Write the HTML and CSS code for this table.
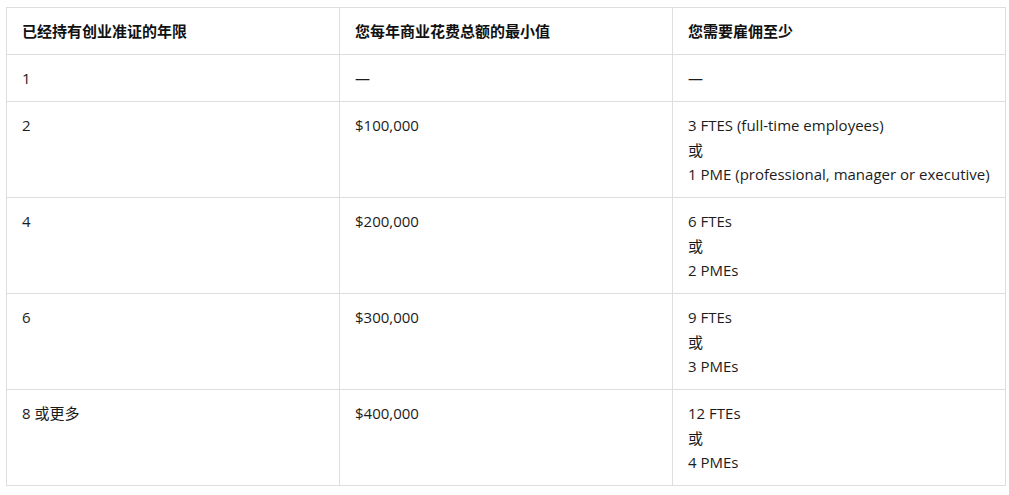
FILE: index.html
```html
<!DOCTYPE html>
<html lang="zh-CN">
<head>
<meta charset="utf-8">
<link rel="stylesheet" href="styles.css">
</head>
<body>
<table class="req-table">
  <thead>
    <tr>
      <th>已经持有创业准证的年限</th>
      <th>您每年商业花费总额的最小值</th>
      <th>您需要雇佣至少</th>
    </tr>
  </thead>
  <tbody>
    <tr>
      <td>1</td>
      <td>—</td>
      <td>—</td>
    </tr>
    <tr>
      <td>2</td>
      <td>$100,000</td>
      <td>3 FTES (full-time employees)<br>或<br>1 PME (professional, manager or executive)</td>
    </tr>
    <tr>
      <td>4</td>
      <td>$200,000</td>
      <td>6 FTEs<br>或<br>2 PMEs</td>
    </tr>
    <tr>
      <td>6</td>
      <td>$300,000</td>
      <td>9 FTEs<br>或<br>3 PMEs</td>
    </tr>
    <tr>
      <td>8 或更多</td>
      <td>$400,000</td>
      <td>12 FTEs<br>或<br>4 PMEs</td>
    </tr>
  </tbody>
</table>
</body>
</html>
```

FILE: styles.css
```css
html, body {
  margin: 0;
  background: #ffffff;
}
body {
  padding: 7px 0 0 6px;
  font-family: "Open Sans", "Noto Sans CJK SC", sans-serif;
  font-size: 15px;
  color: #1c1c1c;
}
.req-table {
  width: 1000px;
  border-collapse: collapse;
  table-layout: fixed;
}
.req-table th,
.req-table td {
  border: 1px solid #dedede;
  padding: 11px 15px 10.5px;
  line-height: 24.5px;
  text-align: left;
  vertical-align: top;
}
.req-table th {
  font-weight: 600;
  color: #111111;
}
```
